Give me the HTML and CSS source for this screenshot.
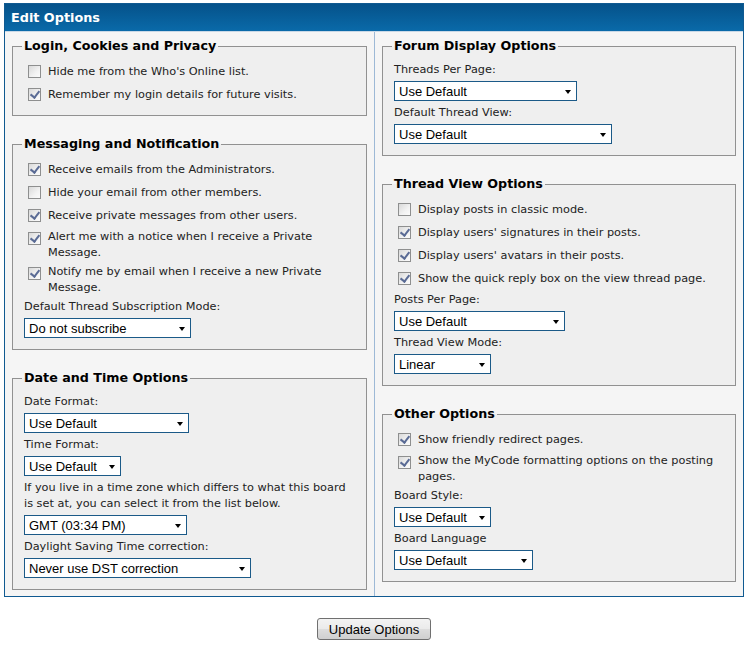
FILE: index.html
```html
<!DOCTYPE html>
<html lang="en">
<head>
<meta charset="utf-8">
<title>Edit Options</title>
<link rel="stylesheet" href="styles.css">
</head>
<body>
<form class="page">
  <div class="panel">
    <div class="thead">Edit Options</div>
    <div class="cols">
      <div class="col">
        <fieldset class="box">
          <legend>Login, Cookies and Privacy</legend>
          <div class="opt"><input type="checkbox" id="invisible"><label for="invisible">Hide me from the Who's Online list.</label></div>
          <div class="opt"><input type="checkbox" id="remember" checked><label for="remember">Remember my login details for future visits.</label></div>
        </fieldset>
        <fieldset class="box">
          <legend>Messaging and Notification</legend>
          <div class="opt"><input type="checkbox" id="allownotices" checked><label for="allownotices">Receive emails from the Administrators.</label></div>
          <div class="opt"><input type="checkbox" id="hideemail"><label for="hideemail">Hide your email from other members.</label></div>
          <div class="opt"><input type="checkbox" id="receivepms" checked><label for="receivepms">Receive private messages from other users.</label></div>
          <div class="opt"><input type="checkbox" id="pmnotice" checked><label for="pmnotice">Alert me with a notice when I receive a Private Message.</label></div>
          <div class="opt"><input type="checkbox" id="pmnotify" checked><label for="pmnotify">Notify me by email when I receive a new Private Message.</label></div>
          <div class="flabel">Default Thread Subscription Mode:</div>
          <div class="frow"><span class="sel"><select class="w167"><option>Do not subscribe</option></select></span></div>
        </fieldset>
        <fieldset class="box">
          <legend>Date and Time Options</legend>
          <div class="flabel">Date Format:</div>
          <div class="frow"><span class="sel"><select class="w165"><option>Use Default</option></select></span></div>
          <div class="flabel">Time Format:</div>
          <div class="frow"><span class="sel"><select class="w97"><option>Use Default</option></select></span></div>
          <div class="flabel flabel-wrap">If you live in a time zone which differs to what this board is set at, you can select it from the list below.</div>
          <div class="frow"><span class="sel"><select class="w163"><option>GMT (03:34 PM)</option></select></span></div>
          <div class="flabel">Daylight Saving Time correction:</div>
          <div class="frow"><span class="sel"><select class="w227"><option>Never use DST correction</option></select></span></div>
        </fieldset>
      </div>
      <div class="col col-right">
        <fieldset class="box">
          <legend>Forum Display Options</legend>
          <div class="flabel">Threads Per Page:</div>
          <div class="frow"><span class="sel"><select class="w183"><option>Use Default</option></select></span></div>
          <div class="flabel">Default Thread View:</div>
          <div class="frow"><span class="sel"><select class="w218"><option>Use Default</option></select></span></div>
        </fieldset>
        <fieldset class="box">
          <legend>Thread View Options</legend>
          <div class="opt"><input type="checkbox" id="classicpostbit"><label for="classicpostbit">Display posts in classic mode.</label></div>
          <div class="opt"><input type="checkbox" id="showsigs" checked><label for="showsigs">Display users' signatures in their posts.</label></div>
          <div class="opt"><input type="checkbox" id="showavatars" checked><label for="showavatars">Display users' avatars in their posts.</label></div>
          <div class="opt"><input type="checkbox" id="showquickreply" checked><label for="showquickreply">Show the quick reply box on the view thread page.</label></div>
          <div class="flabel">Posts Per Page:</div>
          <div class="frow"><span class="sel"><select class="w171"><option>Use Default</option></select></span></div>
          <div class="flabel">Thread View Mode:</div>
          <div class="frow"><span class="sel"><select class="w97"><option>Linear</option></select></span></div>
        </fieldset>
        <fieldset class="box">
          <legend>Other Options</legend>
          <div class="opt"><input type="checkbox" id="showredirect" checked><label for="showredirect">Show friendly redirect pages.</label></div>
          <div class="opt"><input type="checkbox" id="showcodebuttons" checked><label for="showcodebuttons">Show the MyCode formatting options on the posting pages.</label></div>
          <div class="flabel">Board Style:</div>
          <div class="frow"><span class="sel"><select class="w97"><option>Use Default</option></select></span></div>
          <div class="flabel">Board Language</div>
          <div class="frow"><span class="sel"><select class="w139"><option>Use Default</option></select></span></div>
        </fieldset>
      </div>
    </div>
  </div>
  <div class="submit-row">
    <button type="submit" class="button">Update Options</button>
  </div>
</form>
</body>
</html>
```
FILE: styles.css
```css
* { box-sizing: border-box; }

html, body {
  margin: 0;
  padding: 0;
  background: #fff;
}

body {
  font-family: "DejaVu Sans", Verdana, sans-serif;
  font-size: 11.3px;
  color: #222;
}

.page {
  margin: 0;
}

.panel {
  margin: 3px 8px 0 4px;
  border: 1px solid #105a91;
  background: #f5f5f5;
}

.thead {
  height: 28px;
  line-height: 27px;
  padding: 0 6px;
  color: #fff;
  font-weight: bold;
  font-size: 12.8px;
  background: linear-gradient(#05528a, #0a6aa9);
  border-bottom: 1px solid #c9d8e6;
}

.cols {
  display: grid;
  grid-template-columns: 1fr 1fr;
}

.col {
  padding: 6px 7px 6px 7px;
  display: flex;
  flex-direction: column;
  gap: 20px;
}

.col-right {
  border-left: 1px solid #9db9d6;
}

.box {
  margin: 0;
  padding: 6px 9px 9px 9px;
  border: 1px solid #919191;
  background: #efefef;
  min-width: 0;
}

.box legend {
  padding: 0 2px;
  font-weight: bold;
  font-size: 12.7px;
  line-height: 16px;
  color: #000;
}

.opt {
  display: flex;
  align-items: center;
  line-height: 15.5px;
}

.opt input {
  -webkit-appearance: none;
  appearance: none;
  flex: none;
  align-self: flex-start;
  width: 13px;
  height: 13px;
  margin: 5px 7px 5px 6px;
  border: 1px solid #8e8f8f;
  background: linear-gradient(135deg, #d9d9d9 0%, #f2f2f2 60%, #fbfbfb 100%);
  position: relative;
}

.opt input:checked::after {
  content: "";
  position: absolute;
  left: 3px;
  top: 0px;
  width: 4px;
  height: 7px;
  border: solid #5a6b95;
  border-width: 0 2px 2px 0;
  transform: rotate(38deg);
}

.opt label {
  padding: 2px 2px 2px 0;
}

.flabel {
  padding: 2px;
  line-height: 15px;
}

.flabel-wrap {
  line-height: 15.5px;
}

.frow {
  padding: 2px;
}

.sel {
  position: relative;
  display: inline-block;
  vertical-align: top;
}

.sel::after {
  content: "";
  position: absolute;
  right: 6px;
  top: 50%;
  margin-top: -1px;
  border-left: 3px solid transparent;
  border-right: 3px solid transparent;
  border-top: 4px solid #000;
  pointer-events: none;
}

.sel select {
  -webkit-appearance: none;
  appearance: none;
  display: block;
  height: 20px;
  margin: 0;
  padding: 0 16px 0 4px;
  border: 1px solid #1b5a88;
  border-radius: 0;
  background: #fff;
  color: #000;
  font-family: "Liberation Sans", Arial, sans-serif;
  font-size: 13px;
}

.w97 { width: 97px; }
.w139 { width: 139px; }
.w163 { width: 163px; }
.w165 { width: 165px; }
.w167 { width: 167px; }
.w171 { width: 171px; }
.w183 { width: 183px; }
.w218 { width: 218px; }
.w227 { width: 227px; }

.submit-row {
  margin: 21px 8px 0 4px;
  text-align: center;
}

.button {
  height: 22px;
  padding: 0 11px;
  border: 1px solid #707070;
  border-radius: 3px;
  background: linear-gradient(#f3f3f3 0%, #ebebeb 48%, #dddddd 52%, #cfcfcf 100%);
  color: #000;
  font-family: "Liberation Sans", Arial, sans-serif;
  font-size: 13px;
}
```
